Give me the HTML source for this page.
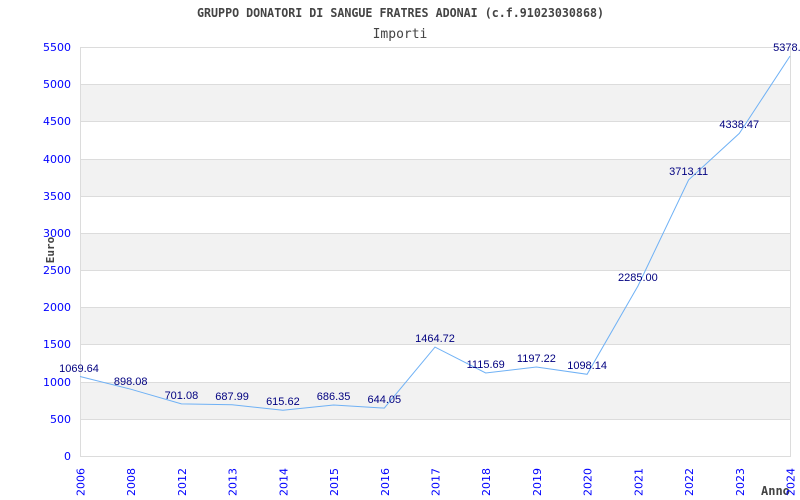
<!DOCTYPE html>
<html><head><meta charset="utf-8"><style>html,body{margin:0;padding:0;background:#fff;width:800px;height:500px;overflow:hidden}</style></head>
<body>
<svg width="800" height="500" xmlns="http://www.w3.org/2000/svg">
<rect width="800" height="500" fill="#fff"/>
<g fill="#f2f2f2">
<rect x="80" y="84" width="710" height="37"/>
<rect x="80" y="159" width="710" height="37"/>
<rect x="80" y="233" width="710" height="37"/>
<rect x="80" y="307" width="710" height="37"/>
<rect x="80" y="382" width="710" height="37"/>
</g>
<g stroke="#dcdcdc" stroke-width="1">
<line x1="80" y1="47.5" x2="790" y2="47.5"/>
<line x1="80" y1="84.5" x2="790" y2="84.5"/>
<line x1="80" y1="121.5" x2="790" y2="121.5"/>
<line x1="80" y1="159.5" x2="790" y2="159.5"/>
<line x1="80" y1="196.5" x2="790" y2="196.5"/>
<line x1="80" y1="233.5" x2="790" y2="233.5"/>
<line x1="80" y1="270.5" x2="790" y2="270.5"/>
<line x1="80" y1="307.5" x2="790" y2="307.5"/>
<line x1="80" y1="344.5" x2="790" y2="344.5"/>
<line x1="80" y1="382.5" x2="790" y2="382.5"/>
<line x1="80" y1="419.5" x2="790" y2="419.5"/>
<line x1="80" y1="456.5" x2="790" y2="456.5"/>
<line x1="80.5" y1="47" x2="80.5" y2="457"/>
<line x1="790.5" y1="47" x2="790.5" y2="457"/>
</g>
<text x="197" y="17" textLength="407" lengthAdjust="spacingAndGlyphs" font-family="DejaVu Sans Mono, monospace" font-weight="bold" font-size="12" fill="#444">GRUPPO DONATORI DI SANGUE FRATRES ADONAI (c.f.91023030868)</text>
<text x="400" y="38" text-anchor="middle" font-family="DejaVu Sans Mono, monospace" font-size="13" fill="#444">Importi</text>
<g font-family="DejaVu Sans, sans-serif" font-size="11" fill="#0000ff" text-anchor="end">
<text x="71" y="51">5500</text><text x="71" y="88">5000</text><text x="71" y="125">4500</text>
<text x="71" y="163">4000</text><text x="71" y="200">3500</text><text x="71" y="237">3000</text>
<text x="71" y="274">2500</text><text x="71" y="311">2000</text><text x="71" y="348">1500</text>
<text x="71" y="386">1000</text><text x="71" y="423">500</text><text x="71" y="460">0</text>
</g>
<text transform="translate(54,250) rotate(-90)" text-anchor="middle" font-family="DejaVu Sans Mono, monospace" font-weight="bold" font-size="11" fill="#444">Euro</text>
<text x="761" y="495" font-family="DejaVu Sans Mono, monospace" font-weight="bold" font-size="12" fill="#444">Anno</text>
<g font-family="DejaVu Sans, sans-serif" font-size="11" fill="#0000ff">
<text transform="translate(84.5,496) rotate(-90)">2006</text>
<text transform="translate(135.2,496) rotate(-90)">2008</text>
<text transform="translate(185.9,496) rotate(-90)">2012</text>
<text transform="translate(236.6,496) rotate(-90)">2013</text>
<text transform="translate(287.4,496) rotate(-90)">2014</text>
<text transform="translate(338.1,496) rotate(-90)">2015</text>
<text transform="translate(388.8,496) rotate(-90)">2016</text>
<text transform="translate(439.5,496) rotate(-90)">2017</text>
<text transform="translate(490.2,496) rotate(-90)">2018</text>
<text transform="translate(540.9,496) rotate(-90)">2019</text>
<text transform="translate(591.6,496) rotate(-90)">2020</text>
<text transform="translate(642.4,496) rotate(-90)">2021</text>
<text transform="translate(693.1,496) rotate(-90)">2022</text>
<text transform="translate(743.8,496) rotate(-90)">2023</text>
<text transform="translate(794.5,496) rotate(-90)">2024</text>
</g>
<polyline fill="none" stroke="#6fb1f5" stroke-width="1" points="80,376.5 130.7,389.2 181.4,403.9 232.1,404.8 282.9,410.2 333.6,405 384.3,408.1 435,347.1 485.7,373 536.4,367 587.1,374.3 637.9,286.1 688.6,179.9 739.3,133.4 790,56.1"/>
<g font-family="Liberation Sans, sans-serif" font-size="11" fill="#000080" text-anchor="middle">
<text x="79" y="372">1069.64</text>
<text x="130.7" y="385">898.08</text>
<text x="181.4" y="399">701.08</text>
<text x="232.1" y="400">687.99</text>
<text x="282.9" y="405">615.62</text>
<text x="333.6" y="400">686.35</text>
<text x="384.3" y="403">644.05</text>
<text x="435" y="342">1464.72</text>
<text x="485.7" y="368">1115.69</text>
<text x="536.4" y="362">1197.22</text>
<text x="587.1" y="369">1098.14</text>
<text x="637.9" y="281">2285.00</text>
<text x="688.6" y="175">3713.11</text>
<text x="739.3" y="128">4338.47</text>
<text x="790" y="51">5378.1</text>
</g>
</svg>
</body></html>
